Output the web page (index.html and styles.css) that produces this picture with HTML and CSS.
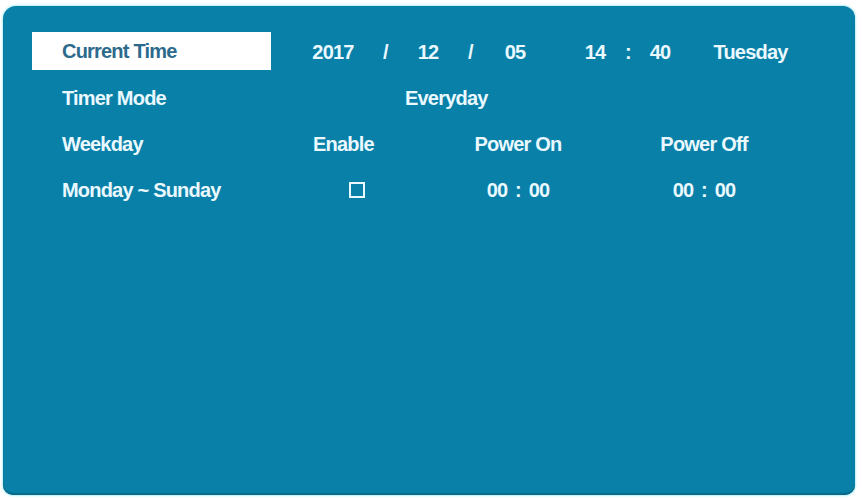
FILE: index.html
```html
<!DOCTYPE html>
<html>
<head>
<meta charset="utf-8">
<link rel="stylesheet" href="styles.css">
</head>
<body>
<div class="panel">
  <div class="row first">
    <div class="label selected">Current Time</div>
    <div class="date">
      <span>2017</span><span>/</span><span>12</span><span>/</span><span>05</span><span></span><span>14</span><span>:</span><span>40</span><span>Tuesday</span>
    </div>
  </div>
  <div class="row">
    <div class="label">Timer Mode</div>
    <div class="mode">Everyday</div>
  </div>
  <div class="row">
    <div class="label">Weekday</div>
    <div class="cols">
      <div class="c-enable">Enable</div>
      <div class="c-on">Power On</div>
      <div class="c-off">Power Off</div>
    </div>
  </div>
  <div class="row">
    <div class="label">Monday ~ Sunday</div>
    <div class="cols">
      <div class="c-check"><span class="box"></span></div>
      <div class="c-on time">00 : 00</div>
      <div class="c-off time">00 : 00</div>
    </div>
  </div>
</div>
</body>
</html>
```
FILE: styles.css
```css
html, body {
  margin: 0;
  padding: 0;
  background: #ffffff;
}
body {
  width: 862px;
  height: 498px;
  overflow: hidden;
  padding: 6px 0 0 3px;
  box-sizing: border-box;
}
.panel {
  width: 852px;
  height: 489px;
  box-sizing: border-box;
  background: #0880a7;
  border-radius: 13px 12px 10px 10px;
  box-shadow: 0 0 2px 1px #b8eef7, inset 0 -2px 1px #0a6a86;
  padding: 26px 0 0 29px;
  display: flex;
  flex-direction: column;
  gap: 8px;
  font-family: "Liberation Sans", Arial, sans-serif;
  font-weight: bold;
  font-size: 20px;
  letter-spacing: -0.8px;
  color: #eaf8ff;
}
.row {
  display: flex;
  align-items: center;
  height: 38px;
}
.row.first {
  margin-bottom: 1px;
}
.label {
  width: 239px;
  height: 38px;
  box-sizing: border-box;
  padding-left: 30px;
  display: flex;
  align-items: center;
  flex-shrink: 0;
}
.label.selected {
  background: #ffffff;
  color: #2d6b8c;
}
.date {
  display: grid;
  grid-template-columns: 60px 45px 40px 45px 44px 38px 40px 26px 38px 143px;
  margin-left: 32px;
  margin-top: 2px;
  text-align: center;
}
.mode {
  margin-left: 134px;
}
.cols {
  display: grid;
  grid-template-columns: 162px 170px 202px;
  align-items: center;
}
.c-enable {
  padding-left: 42px;
}
.c-check {
  padding-left: 78px;
  display: flex;
  align-items: center;
}
.c-on, .c-off {
  text-align: center;
}
.time {
  word-spacing: 3px;
}
.box {
  width: 12px;
  height: 12px;
  border: 2px solid #eaf8ff;
  display: block;
}
```
